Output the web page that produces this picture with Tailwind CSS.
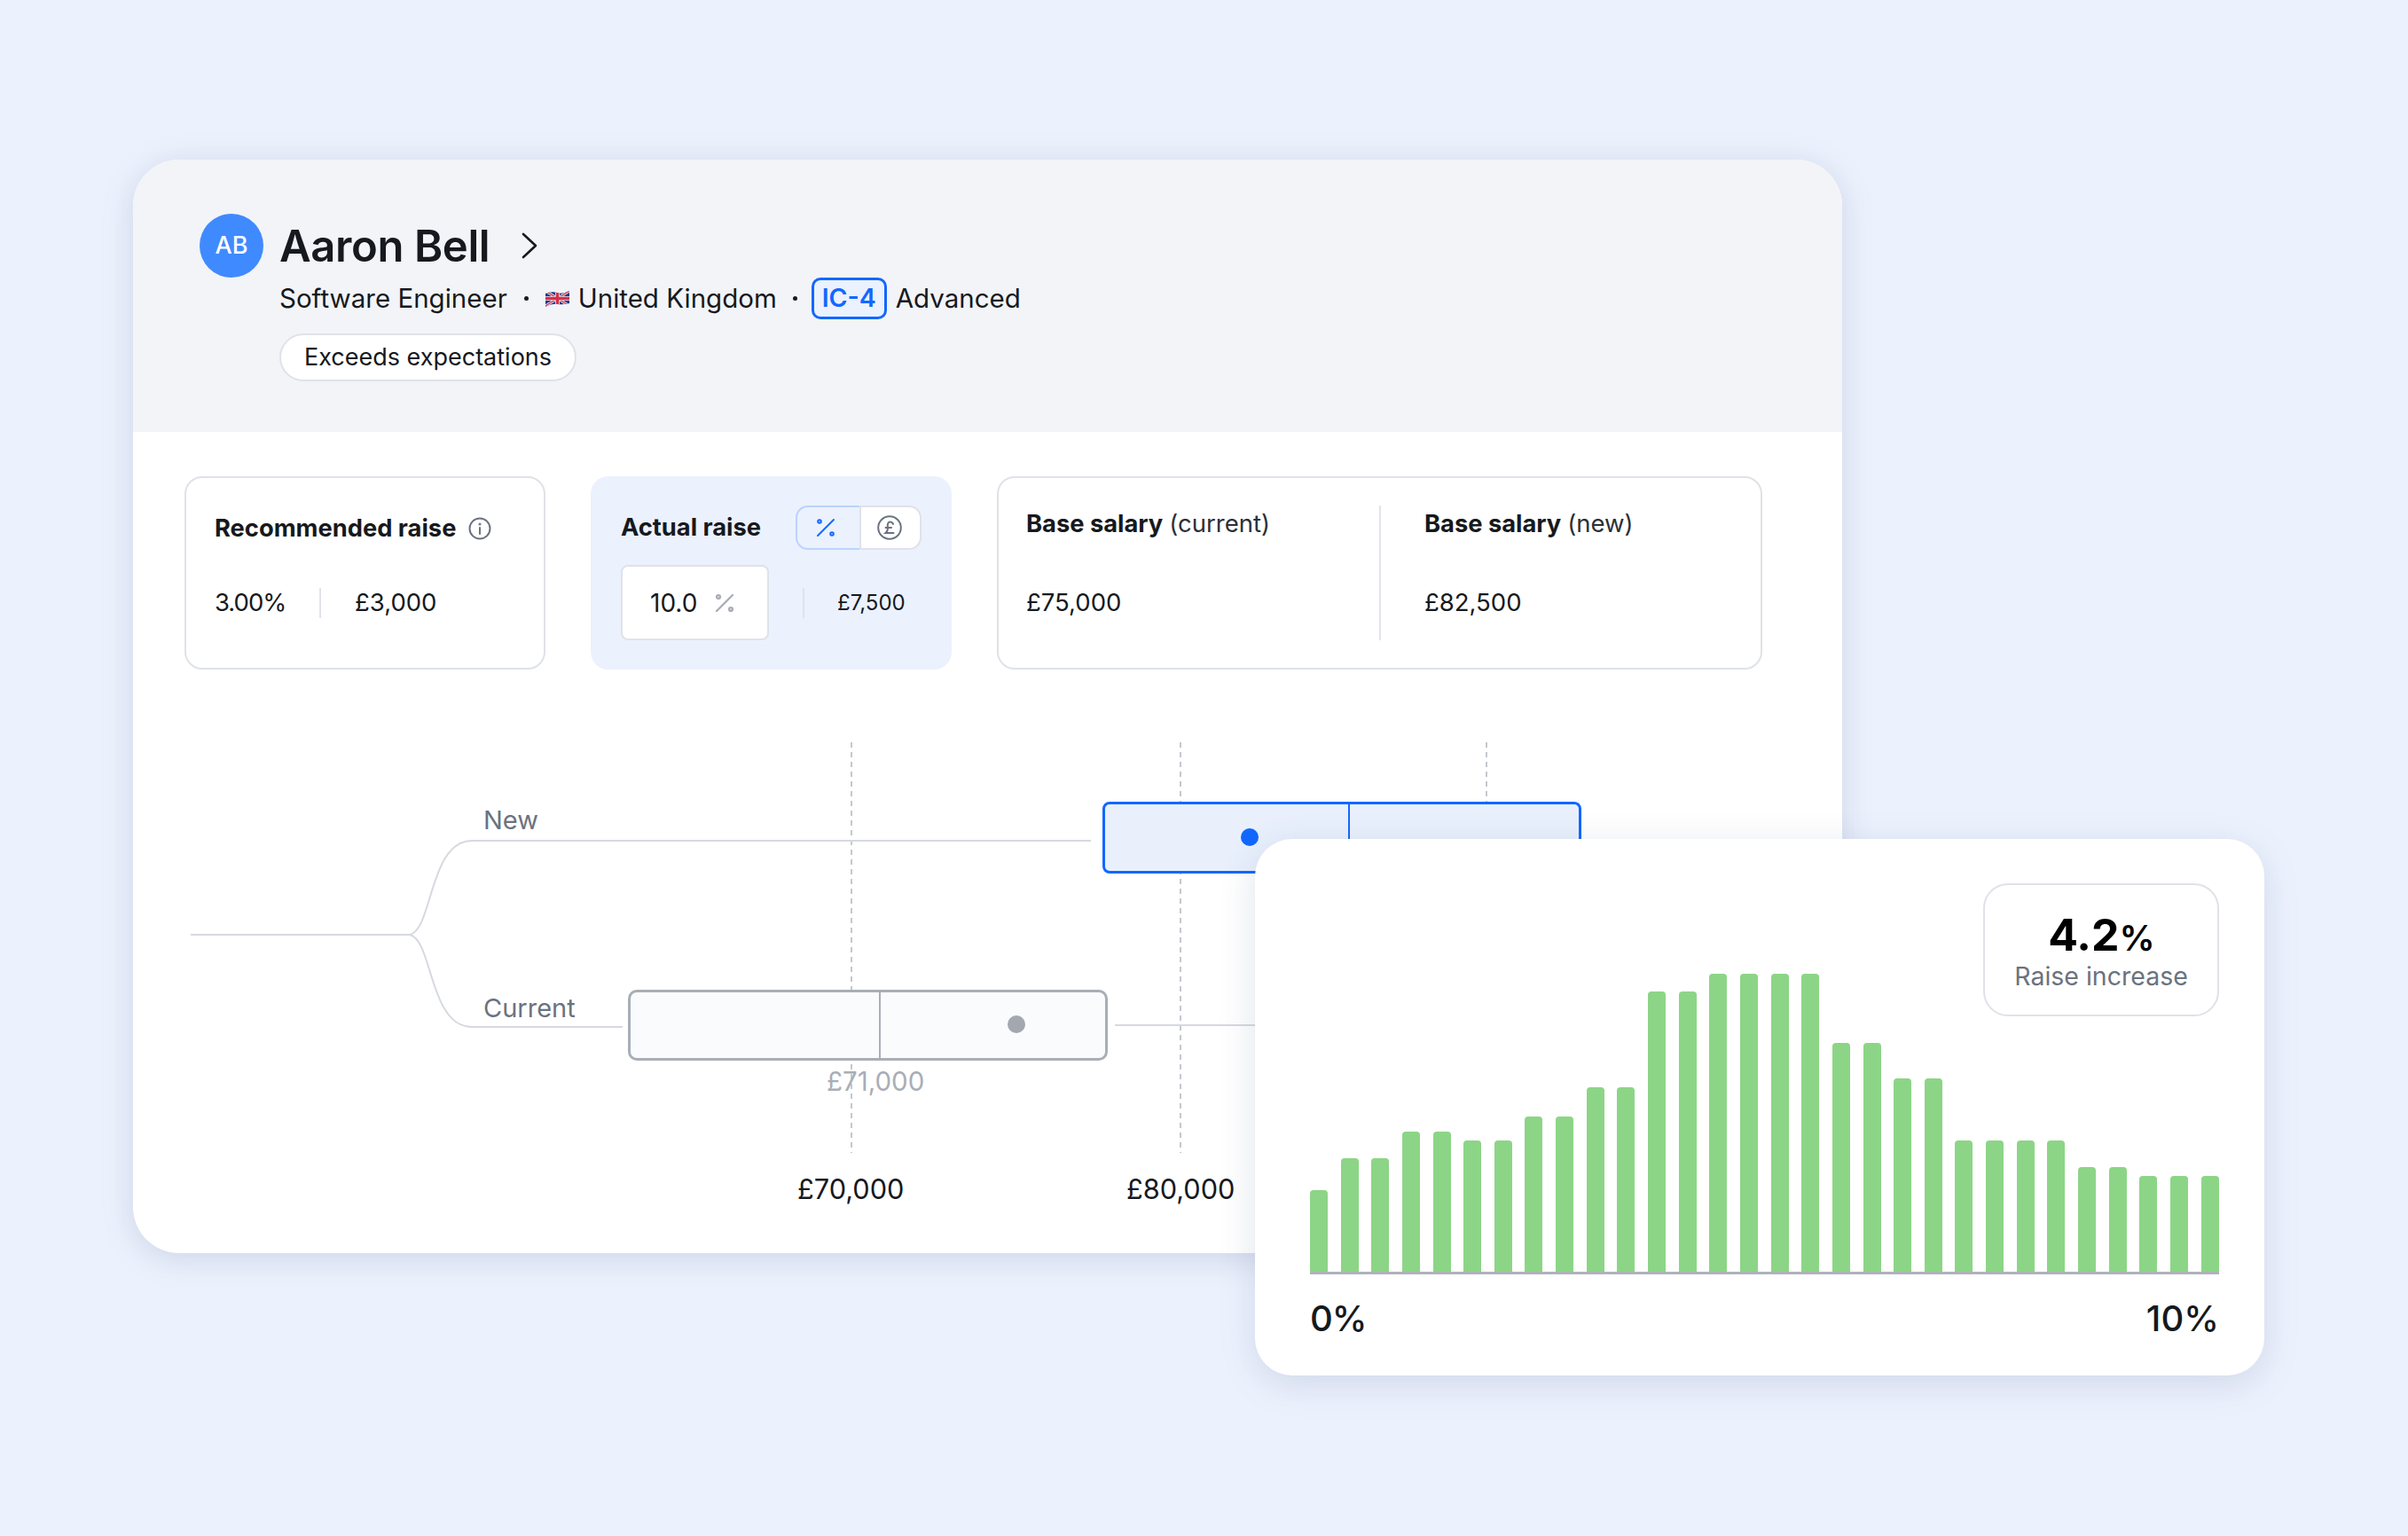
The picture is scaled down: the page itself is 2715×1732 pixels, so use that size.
<!doctype html>
<html>

<head>
  <meta charset="UTF-8">
  <title>Aaron Bell</title>
  <script src="https://cdn.jsdelivr.net/npm/@tailwindcss/browser@4"></script>
</head>

<body class="relative w-[2715px] h-[1732px] overflow-hidden bg-[#ecf2fd] font-['Inter',sans-serif] text-[#16191d]">

  <!-- main card -->
  <div class="absolute left-[150px] top-[180px] w-[1927px] h-[1233px] rounded-[52px] bg-white overflow-hidden shadow-[0_6px_36px_rgba(60,80,130,0.18)]">

    <!-- header -->
    <div class="h-[307px] bg-[#f2f4f8] pl-[75px] pt-[61px] flex gap-[18px]">
      <div class="w-[72px] h-[72px] rounded-full bg-[#408aff] text-white flex items-center justify-center text-[27px] font-medium shrink-0">AB</div>
      <div class="flex flex-col">
        <div class="h-[72px] flex items-center gap-[35px]">
          <span class="text-[49px] font-semibold tracking-[-0.4px] leading-none">Aaron Bell</span>
          <svg class="w-[20px] h-[30px]" viewBox="0 0 20 30" fill="none" stroke="#16191d" stroke-width="2.6" stroke-linecap="round" stroke-linejoin="round"><path d="M3 2 L17 15 L3 28" /></svg>
        </div>
        <div class="h-[47px] flex items-center text-[29.5px] whitespace-nowrap">
          <span>Software Engineer</span>
          <span class="w-[5px] h-[5px] rounded-full bg-[#16191d] ml-[19px] mr-[19px]"></span>
          <svg class="w-[27px] h-[19px] mr-[10px]" viewBox="0 0 27 19">
            <defs><clipPath id="wave"><path d="M0 4 Q7 1 13 3 T27 1 V15 Q20 17 14 16 T0 19 Z" /></clipPath></defs>
            <g clip-path="url(#wave)">
              <rect width="27" height="19" fill="#1f3a8a" />
              <path d="M0 1 L27 18 M27 1 L0 18" stroke="#e8eaf0" stroke-width="3" />
              <path d="M0 1 L27 18 M27 1 L0 18" stroke="#d62f49" stroke-width="1.2" />
              <path d="M13.5 0 V19 M0 9.5 H27" stroke="#e8eaf0" stroke-width="5" />
              <path d="M13.5 0 V19 M0 9.5 H27" stroke="#d62f49" stroke-width="3.4" />
            </g>
          </svg>
          <span>United Kingdom</span>
          <span class="w-[5px] h-[5px] rounded-full bg-[#16191d] ml-[18px] mr-[16px]"></span>
          <span class="w-[85px] h-[47px] rounded-[10px] border-[3px] border-[#1268fe] bg-[#ebf1fd] text-[#1268fe] font-semibold text-[28.5px] flex items-center justify-center">IC-4</span>
          <span class="ml-[10px]">Advanced</span>
        </div>
        <div class="mt-[16px] w-[335px] h-[54px] rounded-full border-[2px] border-[#dfe2e8] bg-white flex items-center justify-center text-[27px]">Exceeds expectations</div>
      </div>
    </div>

    <!-- raise cards -->
    <div class="mt-[50px] ml-[58px] flex gap-[51px]">
      <div class="w-[407px] h-[218px] rounded-[20px] border-[2px] border-[#dfe2e8] pl-[32px] pt-[38px]">
        <div class="h-[38px] flex items-center gap-[14px] text-[27.3px] font-bold">
          <span>Recommended raise</span>
          <svg class="w-[26px] h-[26px]" viewBox="0 0 26 26" fill="none" stroke="#6b7280" stroke-width="2"><circle cx="13" cy="13" r="11.5" /><path d="M13 12 V19" stroke-linecap="round" /><circle cx="13" cy="8" r="0.6" /></svg>
        </div>
        <div class="mt-[48px] h-[34px] flex items-center text-[27.5px]">
          <span class="w-[118px] tracking-[-1px]">3.00%</span>
          <span class="w-[2px] h-[34px] bg-[#e1e4ea]"></span>
          <span class="ml-[38px]">£3,000</span>
        </div>
      </div>

      <div class="w-[407px] h-[218px] rounded-[20px] bg-[#ebf1fd] pl-[34px] pr-[34px] pt-[33px]">
        <div class="flex items-center justify-between">
          <span class="text-[27.3px] font-bold">Actual raise</span>
          <div class="flex h-[50px]">
            <div class="w-[72px] pr-[7px] rounded-l-[14px] border-[2px] border-r-0 border-[#bcd3fd] flex items-center justify-center">
              <svg class="w-[22px] h-[22px]" viewBox="0 0 22 22" fill="none" stroke="#1268fe" stroke-width="2"><path d="M20 2 L2 20" stroke-linecap="round" /><circle cx="4" cy="4" r="1.8" /><circle cx="18" cy="18" r="1.8" /></svg>
            </div>
            <div class="w-[70px] pr-[3px] rounded-r-[14px] border-[2px] border-[#dfe2e8] bg-white flex items-center justify-center">
              <svg class="w-[28px] h-[28px]" viewBox="0 0 28 28" fill="none" stroke="#6b7280" stroke-width="2" stroke-linecap="round"><circle cx="14" cy="14" r="12.8" /><path d="M18 10 C17.5 7.5 14 6.8 12.5 8.6 C11 10.5 12.2 13 11.8 16 C11.6 17.6 10.8 19 9.5 20 H18.5 M9.5 14 H16" /></svg>
            </div>
          </div>
        </div>
        <div class="mt-[17px] flex items-center">
          <div class="w-[167px] h-[85px] rounded-[8px] border-[2px] border-[#dfe2e8] bg-white pl-[31px] flex items-center text-[28px]">
            <span>10.0</span>
            <svg class="w-[22px] h-[22px] ml-[20px]" viewBox="0 0 22 22" fill="none" stroke="#a9aeb6" stroke-width="2.4"><path d="M20 2 L2 20" stroke-linecap="round" /><circle cx="4" cy="4" r="1.9" /><circle cx="18" cy="18" r="1.9" /></svg>
          </div>
          <span class="w-[2px] h-[34px] bg-[#dfe3ea] ml-[38px]"></span>
          <span class="ml-[37px] text-[24px]">£7,500</span>
        </div>
      </div>

      <div class="w-[863px] h-[218px] rounded-[20px] border-[2px] border-[#dfe2e8] pt-[31px] flex text-[27.5px]">
        <div class="w-[429px] pl-[31px] pt-[2px]">
          <div class="h-[38px] flex items-center gap-[7px]"><span class="font-bold text-[27.3px]">Base salary</span><span class="text-[#2c3036]">(current)</span></div>
          <div class="mt-[53px] h-[34px] flex items-center">£75,000</div>
        </div>
        <span class="w-[2px] h-[152px] bg-[#e1e4ea]"></span>
        <div class="pl-[49px] pt-[2px]">
          <div class="h-[38px] flex items-center gap-[7px]"><span class="font-bold text-[27.3px]">Base salary</span><span class="text-[#2c3036]">(new)</span></div>
          <div class="mt-[53px] h-[34px] flex items-center">£82,500</div>
        </div>
      </div>
    </div>

    <!-- range chart, places are page coordinates minus the card corner -->
    <div class="relative h-[658px]">
      <svg class="absolute left-0 top-0 w-[1927px] h-[658px]" viewBox="150 755 1927 658" fill="none">
        <path d="M960 837 V1300 M1331 837 V1300 M1676 837 V904" stroke="#c4c8ce" stroke-width="2" stroke-dasharray="6 5" />
        <path d="M215 1054 H462 C488 1048 484 948 532 948 H1230 M462 1054 C488 1060 484 1158 532 1158 H702 M1257 1156 H1420" stroke="#d6d9df" stroke-width="2" />
      </svg>

      <span class="absolute left-[395px] top-[152px] text-[29px] leading-[36px] text-[#6b7280]">New</span>
      <span class="absolute left-[395px] top-[364px] text-[29px] leading-[36px] text-[#6b7280]">Current</span>

      <div class="absolute left-[1093px] top-[149px] w-[540px] h-[81px] rounded-[8px] border-[3px] border-[#1268fe] bg-[#e9f0fc]">
        <span class="absolute left-[274px] top-0 w-[2px] h-[75px] bg-[#1268fe]"></span>
        <span class="absolute left-[153px] top-[27px] w-[20px] h-[20px] rounded-full bg-[#1268fe]"></span>
      </div>

      <div class="absolute left-[558px] top-[361px] w-[541px] h-[80px] rounded-[10px] border-[3px] border-[#a9aeb6] bg-[#fafbfd]">
        <span class="absolute left-[280px] top-0 w-[2px] h-[74px] bg-[#a9aeb6]"></span>
        <span class="absolute left-[425px] top-[26px] w-[20px] h-[20px] rounded-full bg-[#a3a8b0]"></span>
      </div>

      <span class="absolute left-[782px] top-[446px] text-[29.5px] leading-[36px] text-[#a9aeb6]">£71,000</span>
      <span class="absolute left-[749px] top-[568px] text-[30.7px] leading-[36px]">£70,000</span>
      <span class="absolute left-[1120px] top-[568px] text-[30.7px] leading-[36px]">£80,000</span>
    </div>
  </div>

  <!-- distribution card -->
  <div class="absolute left-[1415px] top-[946px] w-[1138px] h-[605px] rounded-[42px] bg-white pl-[62px] pr-[51px] shadow-[0_10px_40px_rgba(60,80,130,0.16)]">
    <div class="absolute right-[51px] top-[50px] w-[266px] h-[150px] rounded-[28px] border-[2px] border-[#dfe2e8] bg-white flex flex-col items-center">
      <div class="mt-[31px] h-[50px] flex items-baseline font-bold text-[50px] leading-[50px] text-black">4.2<span class="text-[40px] font-semibold tracking-[-1px]">%</span></div>
      <div class="mt-[4px] text-[28.5px] leading-[36px] text-[#6b7280]">Raise increase</div>
    </div>

    <div class="h-[488px] flex items-end justify-between">
      <div class="w-[20px] h-[92px] rounded-t-[4px] bg-[#8cd586]"></div>
      <div class="w-[20px] h-[128px] rounded-t-[4px] bg-[#8cd586]"></div>
      <div class="w-[20px] h-[128px] rounded-t-[4px] bg-[#8cd586]"></div>
      <div class="w-[20px] h-[158px] rounded-t-[4px] bg-[#8cd586]"></div>
      <div class="w-[20px] h-[158px] rounded-t-[4px] bg-[#8cd586]"></div>
      <div class="w-[20px] h-[148px] rounded-t-[4px] bg-[#8cd586]"></div>
      <div class="w-[20px] h-[148px] rounded-t-[4px] bg-[#8cd586]"></div>
      <div class="w-[20px] h-[175px] rounded-t-[4px] bg-[#8cd586]"></div>
      <div class="w-[20px] h-[175px] rounded-t-[4px] bg-[#8cd586]"></div>
      <div class="w-[20px] h-[208px] rounded-t-[4px] bg-[#8cd586]"></div>
      <div class="w-[20px] h-[208px] rounded-t-[4px] bg-[#8cd586]"></div>
      <div class="w-[20px] h-[316px] rounded-t-[4px] bg-[#8cd586]"></div>
      <div class="w-[20px] h-[316px] rounded-t-[4px] bg-[#8cd586]"></div>
      <div class="w-[20px] h-[336px] rounded-t-[4px] bg-[#8cd586]"></div>
      <div class="w-[20px] h-[336px] rounded-t-[4px] bg-[#8cd586]"></div>
      <div class="w-[20px] h-[336px] rounded-t-[4px] bg-[#8cd586]"></div>
      <div class="w-[20px] h-[336px] rounded-t-[4px] bg-[#8cd586]"></div>
      <div class="w-[20px] h-[258px] rounded-t-[4px] bg-[#8cd586]"></div>
      <div class="w-[20px] h-[258px] rounded-t-[4px] bg-[#8cd586]"></div>
      <div class="w-[20px] h-[218px] rounded-t-[4px] bg-[#8cd586]"></div>
      <div class="w-[20px] h-[218px] rounded-t-[4px] bg-[#8cd586]"></div>
      <div class="w-[20px] h-[148px] rounded-t-[4px] bg-[#8cd586]"></div>
      <div class="w-[20px] h-[148px] rounded-t-[4px] bg-[#8cd586]"></div>
      <div class="w-[20px] h-[148px] rounded-t-[4px] bg-[#8cd586]"></div>
      <div class="w-[20px] h-[148px] rounded-t-[4px] bg-[#8cd586]"></div>
      <div class="w-[20px] h-[118px] rounded-t-[4px] bg-[#8cd586]"></div>
      <div class="w-[20px] h-[118px] rounded-t-[4px] bg-[#8cd586]"></div>
      <div class="w-[20px] h-[108px] rounded-t-[4px] bg-[#8cd586]"></div>
      <div class="w-[20px] h-[108px] rounded-t-[4px] bg-[#8cd586]"></div>
      <div class="w-[20px] h-[108px] rounded-t-[4px] bg-[#8cd586]"></div>
    </div>
    <div class="h-[3px] bg-[#aeb2ba]"></div>
    <div class="mt-[26px] flex justify-between text-[40px] leading-[48px] font-medium">
      <span class="tracking-[-1px]">0%</span>
      <span>10%</span>
    </div>
  </div>

</body>

</html>
